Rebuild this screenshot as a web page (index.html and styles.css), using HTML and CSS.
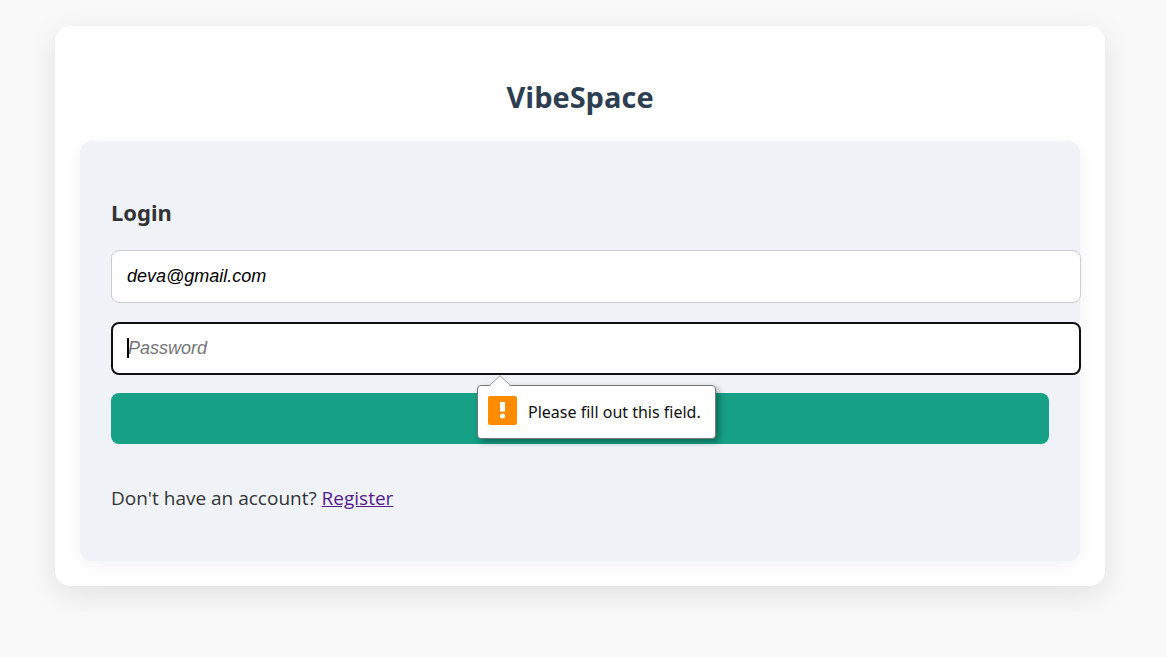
FILE: index.html
```html
<!DOCTYPE html>
<html lang="en">
<head>
<meta charset="utf-8">
<meta name="viewport" content="width=device-width, initial-scale=1">
<title>VibeSpace</title>
<link rel="stylesheet" href="styles.css">
</head>
<body>
<main class="container">
  <h1 class="brand">VibeSpace</h1>
  <section class="panel">
    <h2 class="panel-title">Login</h2>
    <form class="login-form">
      <input class="field" type="email" value="deva@gmail.com" aria-label="Email">
      <div class="field-wrap">
        <input class="field field-active" type="password" placeholder="Password" aria-label="Password" required>
        <span class="caret"></span>
        <div class="tip" role="alert">
          <svg class="tip-arrow" width="22" height="12" viewBox="0 0 22 12" aria-hidden="true"><path d="M0 12 L1 10.500 L11 .7 L21 10.500 L22 12Z" fill="#fff"/><path d="M0.500 10.500 L11 .7 L21.500 10.500" fill="none" stroke="#999"/></svg>
          <svg class="tip-icon" width="29" height="29" viewBox="0 0 29 29" aria-hidden="true"><rect width="29" height="29" rx="2" fill="#ff8c00"/><path d="M12 6h5v9.500h-5z" fill="#fff"/><circle cx="14.500" cy="20" r="2.500" fill="#fff"/></svg>
          <span>Please fill out this field.</span>
        </div>
      </div>
      <button class="submit" type="submit" aria-label="Login"></button>
    </form>
    <p class="switch">Don't have an account? <a class="link" href="#register">Register</a></p>
  </section>
</main>
</body>
</html>
```

FILE: styles.css
```css
* {
  box-sizing: border-box;
}

body {
  margin: 0;
  padding: 26px 61px 26px 55px;
  background: #f9f9f9;
  color: #333;
  font-family: "Segoe UI", "Open Sans", sans-serif;
  font-size: 19px;
  line-height: 30px;
}

.container {
  max-width: 1050px;
  margin: 0 auto;
  padding: 49px 25px 25px;
  border-radius: 15px;
  background: #fff;
  box-shadow: 0 8px 30px rgba(0, 0, 0, 0.1);
}

.brand {
  margin: 0 0 22px;
  color: #2c3e50;
  font-size: 29px;
  line-height: 44px;
  text-align: center;
}

.panel {
  padding: 53px 31px 48px;
  border-radius: 12px;
  background: #eff3f8;
  box-shadow: 0 4px 20px rgba(0, 0, 0, 0.05);
}

.panel-title {
  margin: 0 0 20px;
  font-family: "Segoe UI", "Noto Sans", sans-serif;
  font-size: 22px;
  line-height: 36px;
}

.login-form {
  display: flex;
  flex-direction: column;
}

.field {
  display: block;
  width: calc(100% + 32px);
  height: 53px;
  margin-bottom: 19px;
  padding: 0 15px;
  border: 1px solid #ccc;
  border-radius: 8px;
  background: #fff;
  color: #000;
  font: italic 18px "Liberation Sans", Arial, sans-serif;
}

.field::placeholder {
  color: #757575;
}

.field-wrap {
  position: relative;
}

.field-active {
  margin-bottom: 18px;
  border: 2px solid #101010;
}

.caret {
  position: absolute;
  top: 16px;
  left: 16px;
  width: 2px;
  height: 20px;
  background: #000;
}

.tip {
  position: absolute;
  z-index: 1;
  top: 63px;
  left: 366px;
  display: flex;
  align-items: flex-start;
  gap: 11px;
  min-width: 239px;
  height: 54px;
  padding: 10px 10px 0;
  border: 1px solid #777;
  border-radius: 4px;
  background: #fff;
  box-shadow: 3px 3px 6px rgba(0, 0, 0, 0.35);
  color: #111;
  font-family: "Segoe UI", "Noto Sans", sans-serif;
  font-size: 16px;
  line-height: 32px;
  white-space: nowrap;
}

.tip-arrow {
  position: absolute;
  top: -11px;
  left: 11px;
}

.submit {
  height: 51px;
  border: 0;
  border-radius: 8px;
  background: #16a085;
}

.switch {
  margin: 39px 0 0;
}

.link {
  color: #551a8b;
}
```
